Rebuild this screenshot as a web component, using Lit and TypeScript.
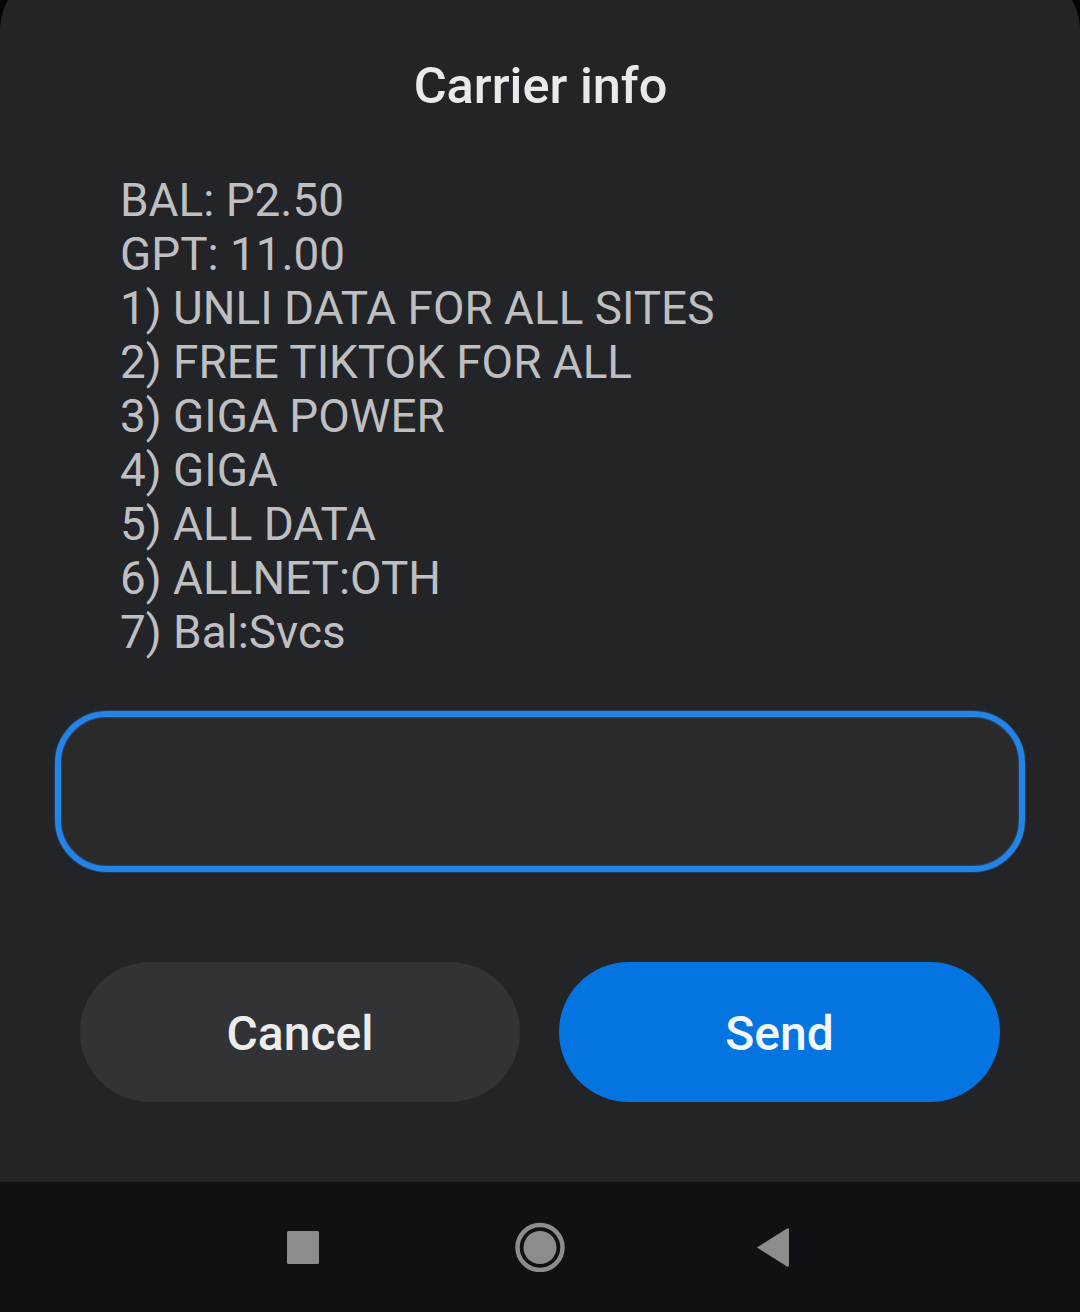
import { LitElement, css, html } from "lit";
import { customElement } from "lit/decorators.js";

const LINES = [
  "BAL: P2.50",
  "GPT: 11.00",
  "1) UNLI DATA FOR ALL SITES",
  "2) FREE TIKTOK FOR ALL",
  "3) GIGA POWER",
  "4) GIGA",
  "5) ALL DATA",
  "6) ALLNET:OTH",
  "7) Bal:Svcs",
];

@customElement("app-root")
export class AppRoot extends LitElement {
  static styles = css`
    :host {
      display: flex;
      flex-direction: column;
      width: 1080px;
      height: 1312px;
      background: #050506;
      font-family: Roboto, "Liberation Sans", sans-serif;
      overflow: hidden;
    }

    /* the sheet's top edge sits just above the visible area */
    .dialog {
      height: 1212px;
      margin-top: -30px;
      box-sizing: border-box;
      background: #232428;
      border-radius: 60px 60px 0 0;
      padding-top: 88px;
      display: flex;
      flex-direction: column;
    }

    .title {
      font-size: 50.5px;
      font-weight: 500;
      line-height: 56px;
      color: #e9e9ea;
      text-align: center;
      padding-left: 1px;
    }

    .message {
      margin: 59px 0 0 120px;
      font-size: 45.85px;
      line-height: 54px;
      color: #bfbfc2;
    }

    .input {
      box-sizing: border-box;
      margin: 52px 55px 0;
      height: 161px;
      border: 6px solid #2484e6;
      border-radius: 52px;
      background: #2a2a2b;
      box-shadow: 0 0 0 1px rgba(36, 132, 230, 0.25),
        inset 0 0 0 1px rgba(36, 132, 230, 0.25);
    }

    .buttons {
      display: grid;
      grid-template-columns: 440px 441px;
      gap: 39px;
      margin: 90px 80px 0;
    }

    .btn {
      box-sizing: border-box;
      height: 140px;
      padding-top: 2px;
      border-radius: 70px;
      display: flex;
      align-items: center;
      justify-content: center;
      font-size: 48px;
      font-weight: 500;
    }

    .cancel {
      background: #323337;
      color: #ececec;
    }

    .send {
      background: #0475e0;
      color: #f5f8fc;
    }

    .nav {
      flex: 1;
      background: #111115;
      display: flex;
      align-items: center;
      justify-content: center;
      gap: 187px;
    }

    svg {
      display: block;
    }
  `;

  render() {
    return html`
      <div class="dialog">
        <div class="title">Carrier info</div>
        <div class="message">${LINES.map((l) => html`<div>${l}</div>`)}</div>
        <div class="input"></div>
        <div class="buttons">
          <div class="btn cancel">Cancel</div>
          <div class="btn send">Send</div>
        </div>
      </div>
      <div class="nav">
        <svg width="50" height="50" viewBox="0 0 50 50">
          <rect x="9" y="9" width="32" height="33" rx="1.5" fill="#8c8c8d" />
        </svg>
        <svg width="50" height="50" viewBox="0 0 50 50">
          <circle cx="25" cy="25.5" r="22.5" fill="none" stroke="#8c8c8d" stroke-width="4.5" />
          <circle cx="25" cy="25.5" r="16.5" fill="#8c8c8d" />
        </svg>
        <svg width="50" height="50" viewBox="0 0 50 50">
          <path d="M5 25.5 L35 6.5 Q37 5.5 37 8 V43 Q37 45.5 35 44.5 Z" fill="#8c8c8d" />
        </svg>
      </div>
    `;
  }
}
